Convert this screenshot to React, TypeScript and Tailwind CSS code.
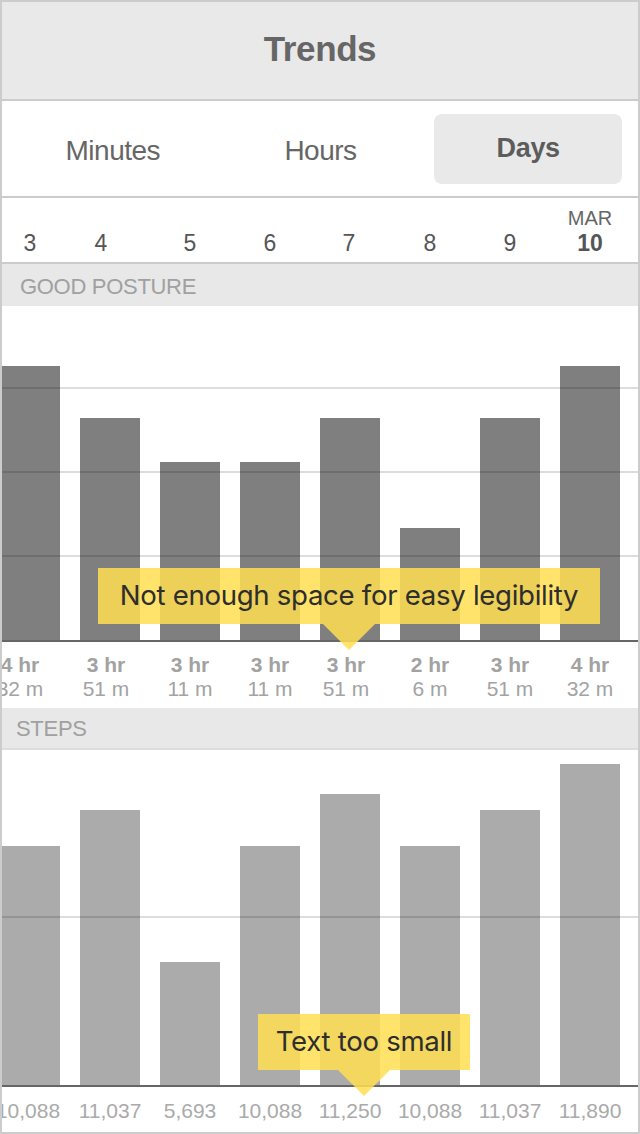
import React from "react";

const ui = { fontFamily: '"Liberation Sans", Arial, sans-serif' };
const note = { fontFamily: 'Inter, "Noto Sans", sans-serif' };

const dates = [
  { d: "3", cls: "" },
  { d: "4", cls: "pr-[18px]" },
  { d: "5", cls: "" },
  { d: "6", cls: "" },
  { d: "7", cls: "pr-[2px]" },
  { d: "8", cls: "" },
  { d: "9", cls: "" },
];

const posture = [
  { h: 274, a: "4 hr", b: "32 m", cls: "pr-[20px]" },
  { h: 222, a: "3 hr", b: "51 m", cls: "pr-[8px]" },
  { h: 178, a: "3 hr", b: "11 m", cls: "" },
  { h: 178, a: "3 hr", b: "11 m", cls: "" },
  { h: 222, a: "3 hr", b: "51 m", cls: "pr-[8px]" },
  { h: 112, a: "2 hr", b: "6 m", cls: "" },
  { h: 222, a: "3 hr", b: "51 m", cls: "" },
  { h: 274, a: "4 hr", b: "32 m", cls: "" },
];

const steps = [
  { h: 239, v: "10,088", cls: "pr-[4px]" },
  { h: 275, v: "11,037", cls: "" },
  { h: 123, v: "5,693", cls: "" },
  { h: 239, v: "10,088", cls: "" },
  { h: 291, v: "11,250", cls: "" },
  { h: 239, v: "10,088", cls: "" },
  { h: 275, v: "11,037", cls: "" },
  { h: 321, v: "11,890", cls: "" },
];

function Callout({ text, className, boxClass }: { text: string; className: string; boxClass: string }) {
  return (
    <div className={`absolute flex flex-col items-center ${className}`} style={note}>
      <div className={`flex items-center justify-center bg-[rgba(255,222,80,0.85)] text-[#2e2e2e] ${boxClass}`}>
        {text}
      </div>
      <div className="w-0 h-0 border-l-[26px] border-r-[26px] border-t-[26px] border-l-transparent border-r-transparent border-t-[rgba(255,222,80,0.85)]" />
    </div>
  );
}

export default function App() {
  return (
    <div className="relative w-[640px] h-[1134px] overflow-hidden bg-white" style={ui}>
      {/* Header */}
      <div className="h-[101px] bg-[#e9e9e9] border-b-2 border-[#cccccc] flex items-center justify-center">
        <span className="text-[35px] font-bold text-[#666666] tracking-[-0.4px]">Trends</span>
      </div>

      {/* Tabs */}
      <div className="h-[97px] border-b-2 border-[#cccccc] grid grid-cols-3 gap-[20px] pl-[19px] pr-[18px] items-center">
        <div className="h-[70px] flex items-center justify-center text-[28px] text-[#666666] tracking-[-0.5px] pt-[4px]">Minutes</div>
        <div className="h-[70px] flex items-center justify-center text-[28px] text-[#666666] tracking-[-0.5px] pt-[4px]">Hours</div>
        <div className="h-[70px] flex items-center justify-center rounded-[8px] bg-[#e9e9e9] text-[27px] font-bold text-[#5c5c5c] tracking-[-0.3px]">Days</div>
      </div>

      {/* Dates */}
      <div className="h-[66px] border-b-2 border-[#cccccc] flex gap-[20px] items-end pb-[5px]">
        {dates.map((x, i) => (
          <div key={i} className={`w-[60px] flex justify-center text-[23px] leading-[28px] text-[#555555] ${x.cls}`}>
            {x.d}
          </div>
        ))}
        <div className="w-[60px] flex flex-col items-center">
          <span className="text-[20px] leading-[22px] text-[#666666]">MAR</span>
          <span className="text-[23px] leading-[28px] font-bold text-[#555555]">10</span>
        </div>
      </div>

      {/* Good posture header */}
      <div className="h-[42px] bg-[#e8e8e8] flex items-center pl-[20px] pt-[3px] text-[22px] text-[#a0a0a0] tracking-[-0.3px]">
        GOOD POSTURE
      </div>

      {/* Posture chart */}
      <div className="relative h-[336px] border-b-2 border-[#666666]">
        <div className="absolute left-0 right-0 bottom-[83px] h-[2px] bg-[#dddddd]" />
        <div className="absolute left-0 right-0 bottom-[167px] h-[2px] bg-[#dddddd]" />
        <div className="absolute left-0 right-0 bottom-[251px] h-[2px] bg-[#dddddd]" />
        <div className="relative h-full flex items-end gap-[20px]">
          {posture.map((p, i) => (
            <div key={i} className="w-[60px] bg-[rgba(0,0,0,0.5)]" style={{ height: p.h }} />
          ))}
        </div>
        <Callout
          text="Not enough space for easy legibility"
          className="left-[98px] top-[262px] w-[502px]"
          boxClass="w-[502px] h-[56px] text-[27.6px] tracking-[-0.3px]"
        />
      </div>

      {/* Posture labels */}
      <div className="h-[66px] flex gap-[20px] pt-[11px]">
        {posture.map((p, i) => (
          <div key={i} className={`w-[60px] flex flex-col items-center whitespace-nowrap text-[21px] leading-[24px] ${p.cls}`}>
            <span className="font-bold text-[#a2a2a2]">{p.a}</span>
            <span className="text-[#a3a3a3]">{p.b}</span>
          </div>
        ))}
      </div>

      {/* Steps header */}
      <div className="h-[42px] bg-[#e8e8e8] border-b-2 border-[#dddddd] flex items-center pl-[16px] text-[22px] text-[#a0a0a0] tracking-[-0.3px]">
        STEPS
      </div>

      {/* Steps chart */}
      <div className="relative h-[337px] border-b-2 border-[#666666]">
        <div className="absolute left-0 right-0 bottom-[167px] h-[2px] bg-[#dddddd]" />
        <div className="relative h-full flex items-end gap-[20px]">
          {steps.map((s, i) => (
            <div key={i} className="w-[60px] bg-[rgba(0,0,0,0.33)]" style={{ height: s.h }} />
          ))}
        </div>
        <Callout
          text="Text too small"
          className="left-[258px] top-[264px] w-[212px]"
          boxClass="w-[212px] h-[56px] text-[27.6px] tracking-[-0.3px]"
        />
      </div>

      {/* Steps labels */}
      <div className="h-[47px] flex gap-[20px] items-center">
        {steps.map((s, i) => (
          <div key={i} className={`w-[60px] flex justify-center whitespace-nowrap text-[21px] text-[#aaaaaa] ${s.cls}`}>
            {s.v}
          </div>
        ))}
      </div>

      {/* Outer frame */}
      <div className="pointer-events-none absolute inset-0 border-2 border-[#cccccc]" />
    </div>
  );
}
